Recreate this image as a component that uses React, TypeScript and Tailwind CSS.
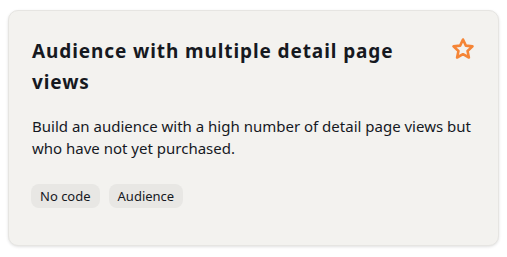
import React from "react";

export default function App() {
  return (
    <div className="w-[507px] h-[257px] bg-white pt-[10px] pl-[8px]" style={{ fontFamily: '"Noto Sans", sans-serif' }}>
      <div className="w-[491px] h-[236px] rounded-[10px] bg-[#f3f2ef] border border-[#e6e5e2] shadow-[0_1px_3px_rgba(0,0,0,0.12)] pl-[23px] pr-[22px] pt-[25px]">
        <div className="flex items-start justify-between">
          <h2 className="text-[19px] leading-[31px] font-bold tracking-[0.9px] text-[#16191f] w-[400px]">
            Audience with multiple detail page views
          </h2>
          <svg width="24" height="24" viewBox="0 0 24 24" className="mt-[1px] mr-[1px]" fill="none" stroke="#f58536" strokeWidth="2.6" strokeLinejoin="round">
            <path d="M12 2.5l2.85 6.1 6.65.8-4.95 4.55 1.35 6.55L12 17.2l-5.9 3.3 1.35-6.55L2.5 9.4l6.65-.8z" />
          </svg>
        </div>
        <p className="mt-[17px] text-[15px] leading-[22px] text-[#16191f]">
          Build an audience with a high number of detail page views but who have not yet purchased.
        </p>
        <div className="flex gap-[9px] mt-[25px] -ml-[1px]">
          <span className="h-[24px] px-[9px] rounded-[8px] bg-[#e8e7e4] text-[13px] leading-[24px] text-[#16191f]">No code</span>
          <span className="h-[24px] px-[9px] rounded-[8px] bg-[#e8e7e4] text-[13px] leading-[24px] text-[#16191f]">Audience</span>
        </div>
      </div>
    </div>
  );
}
